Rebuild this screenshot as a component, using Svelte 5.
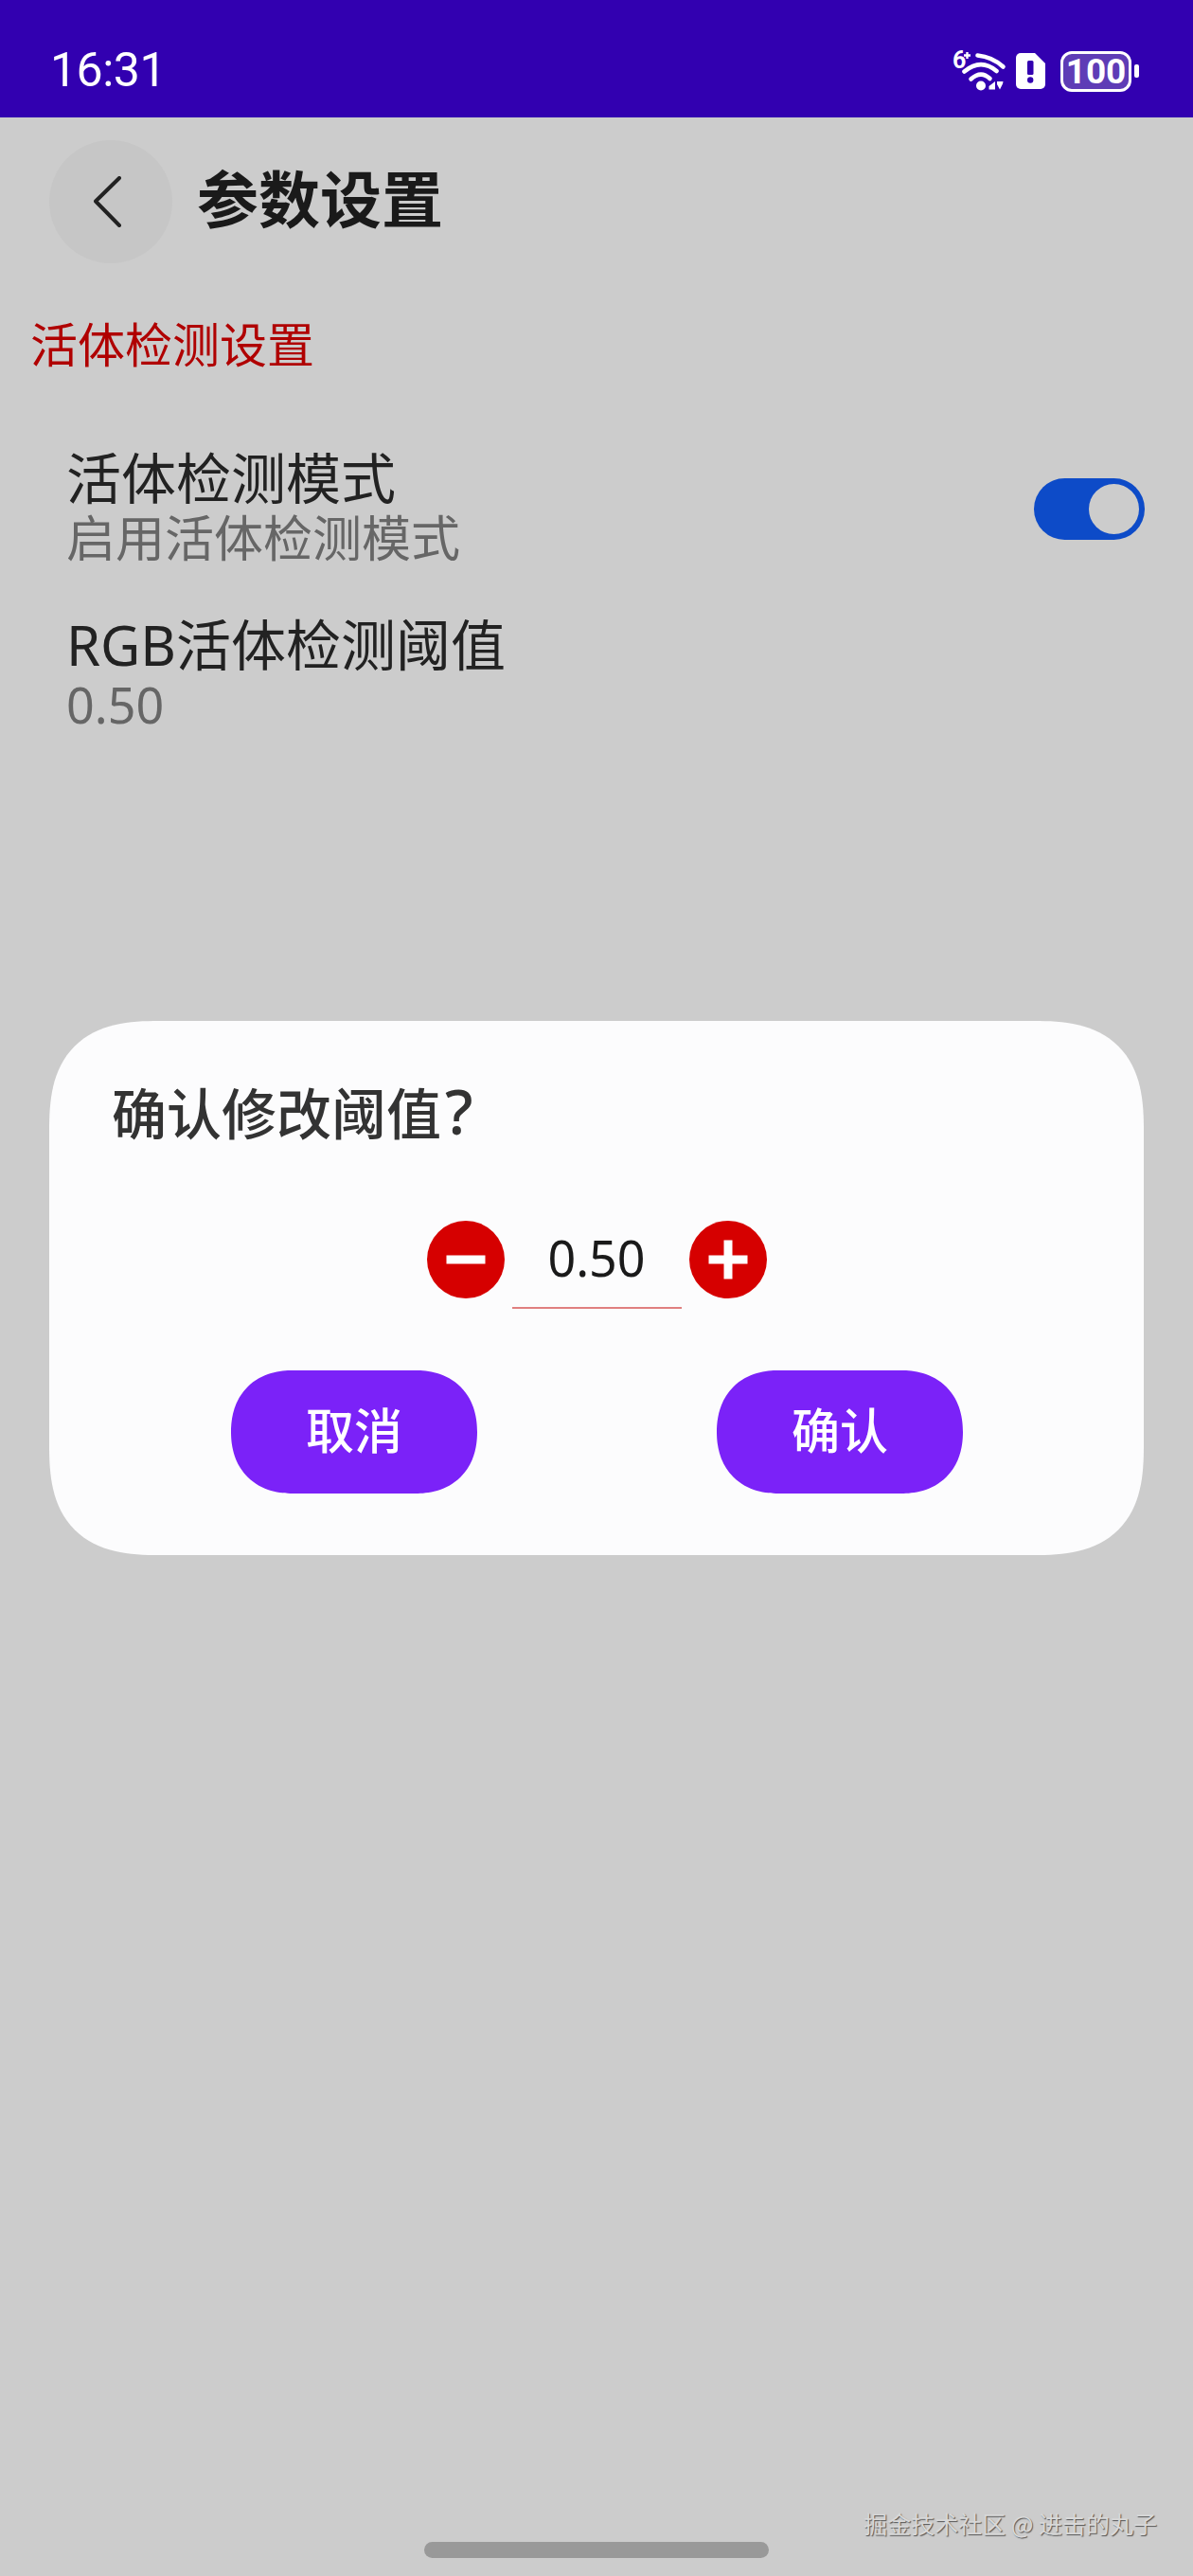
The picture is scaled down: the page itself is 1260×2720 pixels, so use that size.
<script lang="ts">
  let threshold = $state(0.5);
  let liveness = $state(true);
</script>

<div class="page">
  <header class="statusbar">
    <span class="time">16:31</span>
    <div class="status-icons">
      <svg class="wifi" width="66" height="54" viewBox="0 -8 66 54" aria-hidden="true">
        <text x="6" y="20" class="net">6</text>
        <path d="M18 6.5h7M21.5 3v7" stroke="#fff" stroke-width="2.4" fill="none" />
        <path d="M32.5 6.5 Q48 8 59.5 18.5" stroke="#fff" stroke-width="4.6" fill="none" stroke-linecap="round" />
        <path d="M18.5 23.5 Q36 9 52.5 23" stroke="#fff" stroke-width="4.6" fill="none" stroke-linecap="round" />
        <path d="M25.5 31.5 Q36 22 45.5 31" stroke="#fff" stroke-width="4.6" fill="none" stroke-linecap="round" />
        <circle cx="36" cy="38.5" r="5" fill="#fff" />
        <path d="M44.5 39 L51 34 V42.5 H44.5Z M53 34 H59.5 L59 36.5 L56 42.5 L53 37Z" fill="#fff" />
      </svg>
      <svg class="sim" width="31" height="38" viewBox="0 0 31 38" aria-hidden="true">
        <path d="M5 0H20L31 11V33a5 5 0 0 1-5 5H5a5 5 0 0 1-5-5V5a5 5 0 0 1 5-5Z" fill="#fff" />
        <rect x="12" y="8" width="6.5" height="15" rx="1.5" fill="#3200b0" />
        <circle cx="15.2" cy="28.5" r="3.2" fill="#3200b0" />
      </svg>
      <div class="battery">
        <div class="cell">100</div>
        <div class="tip"></div>
      </div>
    </div>
  </header>

  <div class="appbar">
    <button class="back" type="button" aria-label="返回">
      <svg width="30" height="54" viewBox="0 0 30 54" aria-hidden="true">
        <path d="M27 2 L2 26.5 L27 52" fill="none" stroke="#222" stroke-width="4" stroke-linecap="round" stroke-linejoin="round" />
      </svg>
    </button>
    <h1>参数设置</h1>
  </div>

  <h2 class="section">活体检测设置</h2>

  <div class="row">
    <div class="texts">
      <div class="name">活体检测模式</div>
      <div class="desc">启用活体检测模式</div>
    </div>
    <button class="switch" class:on={liveness} type="button" role="switch" aria-checked={liveness} aria-label="活体检测模式" onclick={() => (liveness = !liveness)}>
      <span class="thumb"></span>
    </button>
  </div>

  <div class="row second">
    <div class="texts">
      <div class="name">RGB活体检测阈值</div>
      <div class="desc">{threshold.toFixed(2)}</div>
    </div>
  </div>

  <div class="scrim">
    <div class="dialog">
      <div class="dialog-title">确认修改阈值<span class="qmark">?</span></div>
      <div class="stepper">
        <button class="step" type="button" aria-label="减少" onclick={() => (threshold = Math.max(0, threshold - 0.01))}>
          <svg width="82" height="82" viewBox="0 0 82 82" aria-hidden="true">
            <circle cx="41" cy="41" r="41" fill="#d60000" />
            <rect x="20.5" y="36.5" width="41" height="9" fill="#fff" />
          </svg>
        </button>
        <div class="value">{threshold.toFixed(2)}</div>
        <button class="step" type="button" aria-label="增加" onclick={() => (threshold = Math.min(1, threshold + 0.01))}>
          <svg width="82" height="82" viewBox="0 0 82 82" aria-hidden="true">
            <circle cx="41" cy="41" r="41" fill="#d60000" />
            <rect x="20.5" y="36.5" width="41" height="9" fill="#fff" />
            <rect x="36.5" y="20.5" width="9" height="41" fill="#fff" />
          </svg>
        </button>
      </div>
      <div class="actions">
        <button class="action" type="button">取消</button>
        <button class="action" type="button">确认</button>
      </div>
    </div>
  </div>

  <div class="watermark">掘金技术社区 @ 进击的丸子</div>
  <div class="home-bar"></div>
</div>

<style>
  :global(body) {
    margin: 0;
    background: #cccccc;
  }
  .page {
    position: relative;
    width: 1260px;
    height: 2720px;
    overflow: hidden;
    background: #cccccc;
    font-family: "Noto Sans", "Noto Sans CJK SC", sans-serif;
  }
  button {
    border: none;
    padding: 0;
    background: none;
    font: inherit;
    cursor: pointer;
  }

  .statusbar {
    height: 124px;
    box-sizing: border-box;
    padding: 0 57px 0 53px;
    background: #3200b0;
    display: flex;
    align-items: center;
    justify-content: space-between;
    color: #fff;
  }
  .time {
    font-family: Roboto, sans-serif;
    font-size: 50px;
    line-height: 60px;
    margin-top: 24px;
    letter-spacing: -0.5px;
  }
  .status-icons {
    display: flex;
    align-items: center;
    margin-top: 26px;
  }
  .wifi {
    margin-top: -8px;
    margin-right: 7px;
  }
  .sim {
    margin-right: 16px;
  }
  .net {
    font: 700 25px Roboto, sans-serif;
    fill: #fff;
  }
  .battery {
    display: flex;
    align-items: center;
    gap: 3px;
  }
  .cell {
    width: 75px;
    height: 43px;
    box-sizing: border-box;
    border: 3px solid #fff;
    border-radius: 12px;
    background: #5e3cb6;
    color: #fff;
    font-family: Roboto, sans-serif;
    font-size: 37px;
    font-weight: 700;
    line-height: 37px;
    text-align: center;
  }
  .tip {
    width: 5px;
    height: 14px;
    border-radius: 2px;
    background: #fff;
  }

  .appbar {
    display: flex;
    align-items: center;
    height: 130px;
    margin-top: 24px;
    padding-left: 52px;
  }
  .back {
    width: 130px;
    height: 130px;
    border-radius: 50%;
    background: #c6c6c6;
    display: flex;
    align-items: center;
    justify-content: center;
    padding-right: 6px;
    box-sizing: border-box;
  }
  h1 {
    margin: 0 0 6px 26px;
    font-size: 65px;
    line-height: 80px;
    font-weight: 700;
    color: #1a1a1a;
  }
  .section {
    margin: 56px 0 0 32px;
    font-size: 50px;
    line-height: 60px;
    font-weight: 400;
    color: #b00000;
  }

  .row {
    display: flex;
    align-items: center;
    justify-content: space-between;
    margin-top: 78px;
    padding: 0 51px 0 70px;
  }
  .row.second {
    margin-top: 50px;
  }
  .name {
    font-size: 58px;
    line-height: 66px;
    color: #222;
  }
  .desc {
    font-size: 52px;
    line-height: 60px;
    color: #666;
  }
  .switch {
    width: 117px;
    height: 65px;
    margin-top: 5px;
    padding: 6px;
    box-sizing: border-box;
    border-radius: 33px;
    background: #a0a0a0;
    display: flex;
  }
  .switch.on {
    background: #0d4bc8;
    justify-content: flex-end;
  }
  .thumb {
    width: 53px;
    height: 53px;
    border-radius: 50%;
    background: #cccccc;
  }

  .scrim {
    position: absolute;
    inset: 0;
    display: flex;
    align-items: center;
    justify-content: center;
  }
  .dialog {
    width: 1156px;
    height: 564px;
    box-sizing: border-box;
    padding-top: 59px;
    border-radius: 116px;
    corner-shape: superellipse(1.4);
    background: #fcfcfd;
  }
  .dialog-title {
    margin-left: 66px;
    font-size: 58px;
    line-height: 70px;
    font-weight: 500;
    color: #333;
  }
  .qmark {
    margin-left: 4px;
    font-size: 66px;
  }
  .stepper {
    display: flex;
    justify-content: center;
    margin-top: 78px;
    gap: 8px;
  }
  .step {
    width: 82px;
    height: 82px;
    display: block;
  }
  .step svg {
    display: block;
  }
  .value {
    width: 179px;
    height: 93px;
    box-sizing: border-box;
    border-bottom: 2px solid #e08080;
    text-align: center;
    font-size: 52px;
    line-height: 78px;
    color: #1a1a1a;
  }
  .actions {
    display: flex;
    justify-content: space-between;
    margin-top: 65px;
    padding: 0 191px 0 192px;
  }
  .action {
    width: 260px;
    height: 130px;
    border-radius: 65px;
    corner-shape: superellipse(1.15);
    background: #7b22f8;
    color: #fff;
    font-size: 51px;
    font-weight: 500;
    padding-bottom: 8px;
    box-sizing: border-box;
  }

  .watermark {
    position: absolute;
    right: 38px;
    top: 2649px;
    font-size: 25px;
    line-height: 30px;
    color: #d8d8d8;
    text-shadow: 1px 1px 1px #555;
    font-family: "Noto Sans CJK SC", sans-serif;
  }
  .home-bar {
    position: absolute;
    left: 448px;
    top: 2684px;
    width: 364px;
    height: 17px;
    border-radius: 9px;
    background: #999999;
  }
</style>
